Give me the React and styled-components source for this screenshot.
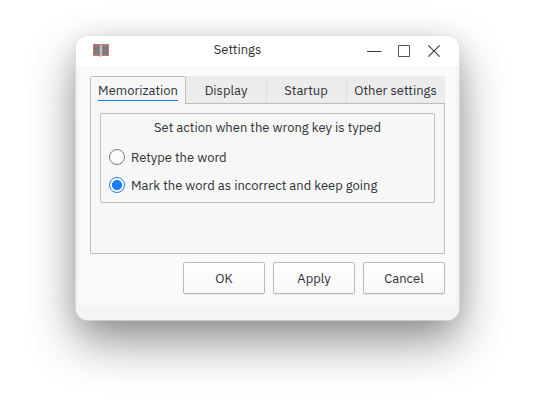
import React, { useState } from "react";
import styled, { createGlobalStyle } from "styled-components";

const GlobalStyle = createGlobalStyle`
  * { box-sizing: border-box; }
  body {
    margin: 0;
    background: #fff;
    overflow: hidden;
    font-family: "IBM Plex Sans", Roboto, "Noto Sans", sans-serif;
    font-size: 13px;
    color: #303134;
  }
`;

const Desktop = styled.main`
  height: 406px;
  padding: 36px 76px 0;
`;

const Window = styled.section`
  width: 383px;
  height: 284px;
  padding: 0 3px 15px;
  display: flex;
  flex-direction: column;
  border-radius: 12px;
  overflow: hidden;
  background: linear-gradient(#fff 30px, #f4f4f4 30px);
  box-shadow:
    0 0 0 1px rgba(225, 225, 225, 0.65),
    0 4px 26px rgba(0, 0, 0, 0.1),
    0 22px 48px rgba(0, 0, 0, 0.42);
`;

const TitleBar = styled.header`
  height: 30px;
  flex: none;
  display: grid;
  grid-template-columns: 90px 1fr 93px;
  align-items: center;
`;

const AppIcon = styled.svg`
  display: block;
  margin: -2px 0 0 13px;
`;

const Title = styled.h1`
  margin: -3px 0 0;
  padding-right: 57px;
  font: inherit;
  text-align: center;
  white-space: nowrap;
`;

const WindowControls = styled.svg`
  display: block;
`;

const Content = styled.div`
  flex: 1;
  padding: 10px 11px 0;
  background: #fafafa;
`;

const TabList = styled.div`
  height: 28px;
  display: grid;
  grid-template-columns: 96px 80px 80px 99px;
  border-radius: 2px 2px 0 0;
  overflow: hidden;
`;

const Tab = styled.button`
  display: flex;
  justify-content: center;
  align-items: flex-start;
  padding: ${(p) => (p.$active ? "3px" : "4px")} 0 0;
  font: inherit;
  color: inherit;
  white-space: nowrap;
  border: 0 solid #bcbcbc;
  border-width: ${(p) => (p.$active ? "1px 1px 0" : "0 0 1px")};
  border-radius: ${(p) => (p.$active ? "2px 2px 0 0" : "0")};
  background: ${(p) => (p.$active ? "#f7f7f7" : "#ececec")};
  box-shadow: ${(p) => (p.$divided ? "inset 1px 0 #e0e0e0" : "none")};
`;

const TabLabel = styled.span`
  width: 80px;
  height: 21px;
  line-height: 22px;
  border-bottom: 1px solid ${(p) => (p.$active ? "#1a7dff" : "transparent")};
  display: flex;
  justify-content: center;
`;

const Panel = styled.div`
  height: 150px;
  padding: 9px 9px 0;
  border: 1px solid #bcbcbc;
  border-top: 0;
  border-radius: 0 0 2px 2px;
  background: #f7f7f7;
`;

const Group = styled.div`
  height: 90px;
  padding: 4px 8px 0;
  border: 1px solid #bfbfbf;
  border-radius: 2px;
`;

const GroupTitle = styled.h2`
  margin: 0 0 6px;
  font: inherit;
  line-height: 19px;
  text-align: center;
`;

const Option = styled.label`
  height: 28px;
  display: flex;
  align-items: center;
  gap: 6px;
  white-space: nowrap;
`;

const Radio = styled.input`
  appearance: none;
  width: 16px;
  height: 16px;
  margin: 0;
  border: 1px solid #7b7b7b;
  border-radius: 50%;
  background: #fcfcfc;
  &:checked {
    border-color: #1a7dff;
    background: radial-gradient(circle, #1a7dff 4.7px, #fff 5.3px);
  }
`;

const Actions = styled.footer`
  display: flex;
  justify-content: flex-end;
  gap: 8px;
  margin-top: 8px;
`;

const Button = styled.button`
  width: 82px;
  height: 32px;
  padding: 1px 0 0;
  font: inherit;
  color: inherit;
  border: 1px solid #bbb;
  border-radius: 2px;
  background: linear-gradient(#fff, #f7f7f7);
  box-shadow: 0 1px 1px rgba(0, 0, 0, 0.08);
`;

const tabs = ["Memorization", "Display", "Startup", "Other settings"];
const actions = ["OK", "Apply", "Cancel"];
const options = ["Retype the word", "Mark the word as incorrect and keep going"];

export default function App() {
  const [tab, setTab] = useState(0);
  const [choice, setChoice] = useState(1);
  return (
    <Desktop>
      <GlobalStyle />
      <Window>
        <TitleBar>
          <AppIcon width="18" height="14" viewBox="0 0 18 14" shapeRendering="crispEdges">
            <path d="M1 1h16v12H1z" fill="#dc7474" />
            <path d="M2 2h14v10H2z" fill="#777" />
            <path d="M3 3h3v1H3zM12 3h3v1h-3zM3 7h3v1H3zM12 7h3v1h-3zM3 10h3v1H3zM12 10h3v1h-3z" fill="#8c8c8c" />
            <path d="M7 2h1v10H7zM10 2h1v10h-1z" fill="#8e8e8e" />
            <path d="M8 2h2v11H8z" fill="#bcbcbc" />
            <path d="M8 13h1v1H8z" fill="#999" />
          </AppIcon>
          <Title>Settings</Title>
          <WindowControls width="93" height="30" viewBox="0 0 93 30" fill="none">
            <path d="M4 15.5h14.5" stroke="#3b3b3b" />
            <path d="M35.5 9.5h11v11h-11z" stroke="#555" />
            <path d="M65.3 9.3l11.4 11.4M76.7 9.3l-11.4 11.4" stroke="#3b3b3b" strokeWidth="1.1" />
          </WindowControls>
        </TitleBar>
        <Content>
          <TabList role="tablist">
            {tabs.map((name, i) => (
              <Tab key={name} role="tab" aria-selected={tab === i} $active={tab === i} $divided={i > 1} onClick={() => setTab(i)}>
                <TabLabel $active={tab === i}>{name}</TabLabel>
              </Tab>
            ))}
          </TabList>
          <Panel role="tabpanel">
            <Group>
              <GroupTitle>Set action when the wrong key is typed</GroupTitle>
              {options.map((name, i) => (
                <Option key={name}>
                  <Radio type="radio" name="wrong-key" checked={choice === i} onChange={() => setChoice(i)} />
                  {name}
                </Option>
              ))}
            </Group>
          </Panel>
          <Actions>
            {actions.map((name) => (
              <Button key={name}>{name}</Button>
            ))}
          </Actions>
        </Content>
      </Window>
    </Desktop>
  );
}
